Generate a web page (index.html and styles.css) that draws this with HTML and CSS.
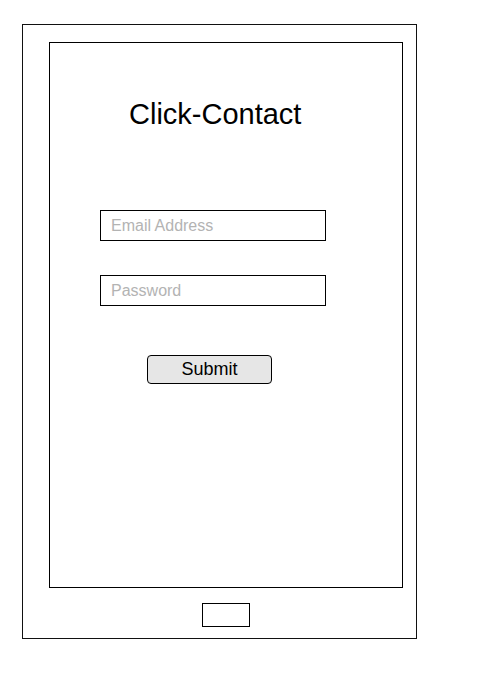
FILE: index.html
```html
<!DOCTYPE html>
<html>
<head>
<meta charset="utf-8">
<link rel="stylesheet" href="styles.css">
</head>
<body>
<div class="device">
  <div class="screen">
    <h1 class="title">Click-Contact</h1>
    <input class="field field-email" type="text" placeholder="Email Address">
    <input class="field field-password" type="password" placeholder="Password">
    <button class="submit" type="button">Submit</button>
  </div>
  <div class="home"></div>
</div>
</body>
</html>
```
FILE: styles.css
```css
html, body {
  margin: 0;
  padding: 0;
  background: #fff;
}
body {
  font-family: "Liberation Sans", Arial, sans-serif;
  padding: 24px 0 0 22px;
}
.device {
  box-sizing: border-box;
  width: 395px;
  height: 615px;
  border: 1px solid #111;
  padding: 17px 0 0 26px;
  display: flex;
  flex-direction: column;
}
.screen {
  box-sizing: border-box;
  width: 354px;
  height: 546px;
  border: 1px solid #000;
  display: flex;
  flex-direction: column;
  align-items: flex-start;
}
.title {
  margin: 55px 0 0 79px;
  font-size: 29px;
  line-height: 32px;
  font-weight: normal;
  color: #000;
}
.field {
  box-sizing: border-box;
  width: 226px;
  height: 31px;
  margin-left: 50px;
  border: 1px solid #000;
  border-radius: 0;
  padding: 0 10px;
  font-family: "Liberation Sans", Arial, sans-serif;
  font-size: 16px;
  color: #000;
  background: #fff;
  outline: none;
}
.field::placeholder {
  color: #b3b3b3;
}
.field-email {
  margin-top: 80px;
}
.field-password {
  margin-top: 34px;
}
.submit {
  box-sizing: border-box;
  width: 125px;
  height: 29px;
  margin: 49px 0 0 97px;
  border: 1px solid #000;
  border-radius: 4px;
  background: #e6e6e6;
  font-family: "Liberation Sans", Arial, sans-serif;
  font-size: 18px;
  color: #000;
  padding: 0;
}
.home {
  box-sizing: border-box;
  width: 48px;
  height: 24px;
  margin: 15px 0 0 153px;
  border: 1px solid #000;
}
```
